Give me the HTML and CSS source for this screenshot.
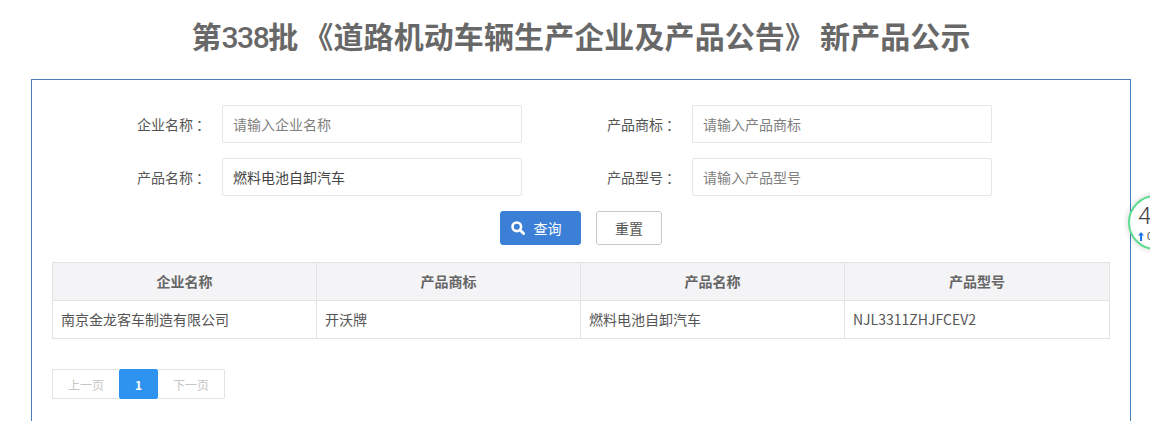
FILE: index.html
```html
<!DOCTYPE html>
<html lang="zh-CN">
<head>
<meta charset="utf-8">
<title>新产品公示</title>
<link rel="stylesheet" href="styles.css">
</head>
<body>
<main class="page">
  <h1 class="title">第<span class="title-num">338</span>批<span class="open-quote">《</span>道路机动车辆生产企业及产品公告<span class="close-quote">》</span>新产品公示</h1>
  <section class="card">
    <form class="form">
      <label class="field"><span class="field-label">企业名称<span class="colon">：</span></span><input class="input" placeholder="请输入企业名称"></label>
      <label class="field"><span class="field-label">产品商标<span class="colon">：</span></span><input class="input" placeholder="请输入产品商标"></label>
      <label class="field"><span class="field-label">产品名称<span class="colon">：</span></span><input class="input" value="燃料电池自卸汽车"></label>
      <label class="field"><span class="field-label">产品型号<span class="colon">：</span></span><input class="input" placeholder="请输入产品型号"></label>
    </form>
    <div class="actions">
      <button class="btn btn-primary" type="button">
        <svg class="btn-icon" viewBox="0 0 14 14" width="14" height="14" aria-hidden="true"><circle cx="5.8" cy="5.8" r="4.3" fill="none" stroke="#fff" stroke-width="2.6"/><path d="M9 9l3.6 3.6" stroke="#fff" stroke-width="2.8" stroke-linecap="round"/></svg>
        查询
      </button>
      <button class="btn btn-default" type="button">重置</button>
    </div>
    <table class="table">
      <thead>
        <tr><th>企业名称</th><th>产品商标</th><th>产品名称</th><th>产品型号</th></tr>
      </thead>
      <tbody>
        <tr><td>南京金龙客车制造有限公司</td><td>开沃牌</td><td>燃料电池自卸汽车</td><td>NJL3311ZHJFCEV2</td></tr>
      </tbody>
    </table>
    <nav class="pager">
      <a class="pager-item pager-prev">上一页</a>
      <a class="pager-item pager-current">1</a>
      <a class="pager-item pager-next">下一页</a>
    </nav>
  </section>
</main>
<aside class="gauge">
  <span class="gauge-num">4</span>
  <span class="gauge-sub">
    <svg class="gauge-arrow" viewBox="0 0 6 9" width="6" height="9" aria-hidden="true"><path d="M3 0L6 3.6H4V9H2V3.6H0z" fill="#1f78e6"/></svg>
    <span>0</span>
  </span>
</aside>
</body>
</html>
```

FILE: styles.css
```css
* { box-sizing: border-box; }
html, body { height: 421px; overflow: hidden; }
body {
  margin: 0;
  background: #fff;
  color: #555;
  font-family: "Noto Sans CJK SC", "Liberation Sans", sans-serif;
  font-size: 14px;
}
.page { width: 1100px; margin-left: 31px; }
.title {
  margin: 0;
  height: 79px;
  padding-top: 13px;
  text-align: center;
  font-size: 30px;
  line-height: 44px;
  font-weight: 700;
  letter-spacing: 0.1px;
  color: #686868;
}
.title-num { font-family: Roboto, sans-serif; font-weight: 500; letter-spacing: -1.5px; }
.open-quote { margin-left: 5px; }
.close-quote { margin-right: 5px; }
.card {
  height: 420px;
  padding: 25px 20px 0;
  border: 1px solid #4a7ebb;
}
.form {
  display: grid;
  grid-template-columns: 470px 470px;
  row-gap: 15px;
}
.field { display: flex; align-items: center; }
.field-label {
  width: 170px;
  padding-right: 15px;
  text-align: right;
  color: #555;
}
.colon { padding-left: 3px; margin-right: -3px; }
.input {
  width: 300px;
  height: 38px;
  padding: 0 10px;
  border: 1px solid #e6e6e6;
  border-radius: 2px;
  background: #fff;
  color: #444;
  font: inherit;
  outline: none;
}
.input::placeholder { color: #808080; opacity: 1; }
.actions {
  display: flex;
  justify-content: center;
  gap: 15px;
  margin-top: 15px;
}
.btn {
  display: inline-flex;
  align-items: center;
  justify-content: center;
  height: 34px;
  border-radius: 3px;
  font: inherit;
  padding: 0;
}
.btn-primary { width: 81px; gap: 9px; padding-right: 9px; border: 1px solid #3b80d6; background: #3b80d6; color: #fff; }
.btn-default { width: 66px; border: 1px solid #c9c9c9; background: #fff; color: #555; }
.btn-icon { flex: none; }
.table {
  width: 1058px;
  margin-top: 17px;
  border-collapse: collapse;
  table-layout: fixed;
}
.table th, .table td {
  border: 1px solid #e2e2e2;
  height: 38px;
  padding: 0 8px 2px;
  line-height: 20px;
}
.table th:not(:last-child) { width: 264px; }
.table th { background: #f4f4f6; color: #666; font-weight: 700; font-size: 14px; text-align: center; }
.table td { color: #555; text-align: left; }
.pager {
  display: flex;
  margin-top: 30px;
  height: 30px;
  font-size: 12px;
}
.pager-item {
  display: flex;
  align-items: center;
  justify-content: center;
  border: 1px solid #e2e2e2;
  color: #c5c5c5;
}
.pager-prev { width: 67px; border-right: 0; border-radius: 2px 0 0 2px; }
.pager-next { width: 67px; border-left: 0; border-radius: 0 2px 2px 0; }
.pager-current {
  width: 39px;
  border-color: #2d93ee;
  background: #2d93ee;
  color: #fff;
  font-weight: 700;
  border-radius: 2px;
}
.gauge {
  position: absolute;
  left: 1128px;
  top: 195px;
  width: 55px;
  height: 55px;
  border: 2px solid #5fdc8f;
  border-radius: 50%;
  background: #fff;
  box-shadow: 0 0 4px 2px rgba(0, 0, 0, 0.1);
  overflow: hidden;
}
.gauge-num {
  position: absolute;
  left: 8px;
  top: 4px;
  font-size: 24px;
  line-height: 30px;
  color: #444;
  font-family: Roboto, sans-serif;
  font-weight: 300;
}
.gauge-sub {
  position: absolute;
  left: 8px;
  top: 32px;
  display: flex;
  align-items: center;
  gap: 3px;
  font-size: 11px;
  line-height: 14px;
  color: #555;
  font-family: "Liberation Sans", sans-serif;
}
.gauge-arrow { flex: none; }
```
